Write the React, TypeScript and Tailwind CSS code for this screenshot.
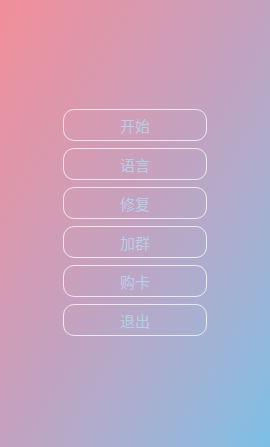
import React from 'react';

const items = ['开始', '语言', '修复', '加群', '购卡', '退出'];

function App() {
  return (
    <div className="flex h-[447px] w-[270px] items-center justify-center bg-gradient-to-br from-[#f28d99] via-[#c3a2c0] to-[#7cbfe6] pb-[2px] font-['Noto_Sans_CJK_SC',sans-serif]">
      <div className="flex w-[144px] flex-col gap-[7px]">
        {items.map((label) => (
          <button
            key={label}
            className="flex h-[32px] items-center justify-center rounded-[11px] border-[1.5px] border-white/75 text-[15px] leading-none text-[#b4dcf2]/80"
          >
            {label}
          </button>
        ))}
      </div>
    </div>
  );
}

export default App;
